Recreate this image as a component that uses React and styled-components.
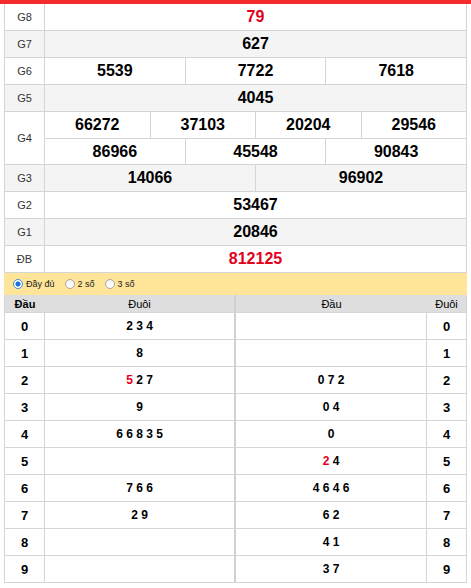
import React from "react";
import styled, { createGlobalStyle } from "styled-components";

const GlobalStyle = createGlobalStyle`
  html, body { margin: 0; padding: 0; background: #fff; }
  body { font-family: "Liberation Sans", Arial, sans-serif; color: #000; }
`;

const Page = styled.div`
  border-top: 4px solid #f52a2d;
  width: 471px;
  box-sizing: border-box;
`;

const Board = styled.div`
  margin: 0 4px;
  border-left: 1px solid #d5d5d5;
  border-right: 1px solid #d5d5d5;
`;

const PrizeRow = styled.div`
  display: grid;
  grid-template-columns: 40px 1fr;
  grid-auto-rows: 26px;
  background: ${(p) => (p.$shade ? "#f4f4f4" : "#fff")};
  border-bottom: 1px solid #d5d5d5;
`;

const Label = styled.div`
  grid-row: span ${(p) => p.$span || 1};
  display: flex;
  align-items: center;
  justify-content: center;
  border-right: 1px solid #d5d5d5;
  font-size: 11px;
  color: #333;
`;

const Numbers = styled.div`
  display: flex;
  & + & { border-top: 1px solid #d5d5d5; }
`;

const Num = styled.div`
  flex: 1 1 0;
  display: flex;
  align-items: center;
  justify-content: center;
  font-size: 16px;
  font-weight: bold;
  color: ${(p) => (p.$red ? "#e3001b" : "#000")};
  & + & { border-left: 1px solid #d5d5d5; }
`;

const Options = styled.div`
  margin: 0 4px;
  height: 22px;
  background: #fee59a;
  display: flex;
  align-items: center;
  padding-left: 9px;
  gap: 10px;
  font-size: 9px;
  color: #222;
`;

const Option = styled.label`
  display: flex;
  align-items: center;
  gap: 3px;
`;

const Radio = styled.span`
  width: 8px;
  height: 8px;
  border-radius: 50%;
  border: 1px solid ${(p) => (p.$on ? "#3b8fd9" : "#a8a8a8")};
  background: ${(p) =>
    p.$on
      ? "radial-gradient(circle, #1a73d9 0 2.3px, #fff 2.8px)"
      : "linear-gradient(#f2f2f2, #fff)"};
  box-sizing: content-box;
`;

const Loto = styled.div`
  margin: 0 4px;
  border-left: 1px solid #d5d5d5;
  border-right: 1px solid #d5d5d5;
`;

const LotoRow = styled.div`
  display: grid;
  grid-template-columns: 40px 1fr 1fr 39px;
  height: ${(p) => (p.$head ? "17px" : "26px")};
  background: ${(p) => (p.$head ? "#dedede" : "#fff")};
  border-bottom: 1px solid #d5d5d5;
`;

const Cell = styled.div`
  display: flex;
  align-items: center;
  justify-content: center;
  font-size: ${(p) => (p.$head ? "11px" : "12px")};
  font-weight: ${(p) => (p.$light ? "normal" : "bold")};
  white-space: pre;
  border-right: ${(p) => p.$line || "0"};
`;

const Hot = styled.span`
  color: #e3001b;
`;

const prizes = [
  { label: "G8", rows: [["79"]], red: true },
  { label: "G7", rows: [["627"]] },
  { label: "G6", rows: [["5539", "7722", "7618"]] },
  { label: "G5", rows: [["4045"]] },
  { label: "G4", rows: [["66272", "37103", "20204", "29546"], ["86966", "45548", "90843"]] },
  { label: "G3", rows: [["14066", "96902"]] },
  { label: "G2", rows: [["53467"]] },
  { label: "G1", rows: [["20846"]] },
  { label: "ĐB", rows: [["812125"]], red: true },
];

const lotoLeft = [
  ["2 3 4"], ["8"], [<Hot key="h">5</Hot>, " 2 7"], ["9"], ["6 6 8 3 5"], [""], ["7 6 6"], ["2 9"], [""], [""],
];
const lotoRight = [
  [""], [""], ["0 7 2"], ["0 4"], ["0"], [<Hot key="h">2</Hot>, " 4"], ["4 6 4 6"], ["6 2"], ["4 1"], ["3 7"],
];

const line = "1px solid #d5d5d5";
const mid = "2px solid #d0d0d0";

export default function App() {
  return (
    <>
      <GlobalStyle />
      <Page>
        <Board>
          {prizes.map((p, i) => (
            <PrizeRow key={p.label} $shade={i % 2 === 1}>
              <Label $span={p.rows.length}>{p.label}</Label>
              {p.rows.map((r, j) => (
                <Numbers key={j}>
                  {r.map((n) => (
                    <Num key={n} $red={p.red}>{n}</Num>
                  ))}
                </Numbers>
              ))}
            </PrizeRow>
          ))}
        </Board>
        <Options>
          <Option><Radio $on />Đầy đủ</Option>
          <Option><Radio />2 số</Option>
          <Option><Radio />3 số</Option>
        </Options>
        <Loto>
          <LotoRow $head>
            <Cell $head>Đầu</Cell>
            <Cell $head $light $line="2px solid #cfcfcf">Đuôi</Cell>
            <Cell $head $light>Đầu</Cell>
            <Cell $head $light>Đuôi</Cell>
          </LotoRow>
          {lotoLeft.map((l, i) => (
            <LotoRow key={i}>
              <Cell $line={line} style={{ fontSize: "13px" }}>{i}</Cell>
              <Cell $line={mid}>{l}</Cell>
              <Cell $line={line}>{lotoRight[i]}</Cell>
              <Cell style={{ fontSize: "13px" }}>{i}</Cell>
            </LotoRow>
          ))}
        </Loto>
      </Page>
    </>
  );
}
